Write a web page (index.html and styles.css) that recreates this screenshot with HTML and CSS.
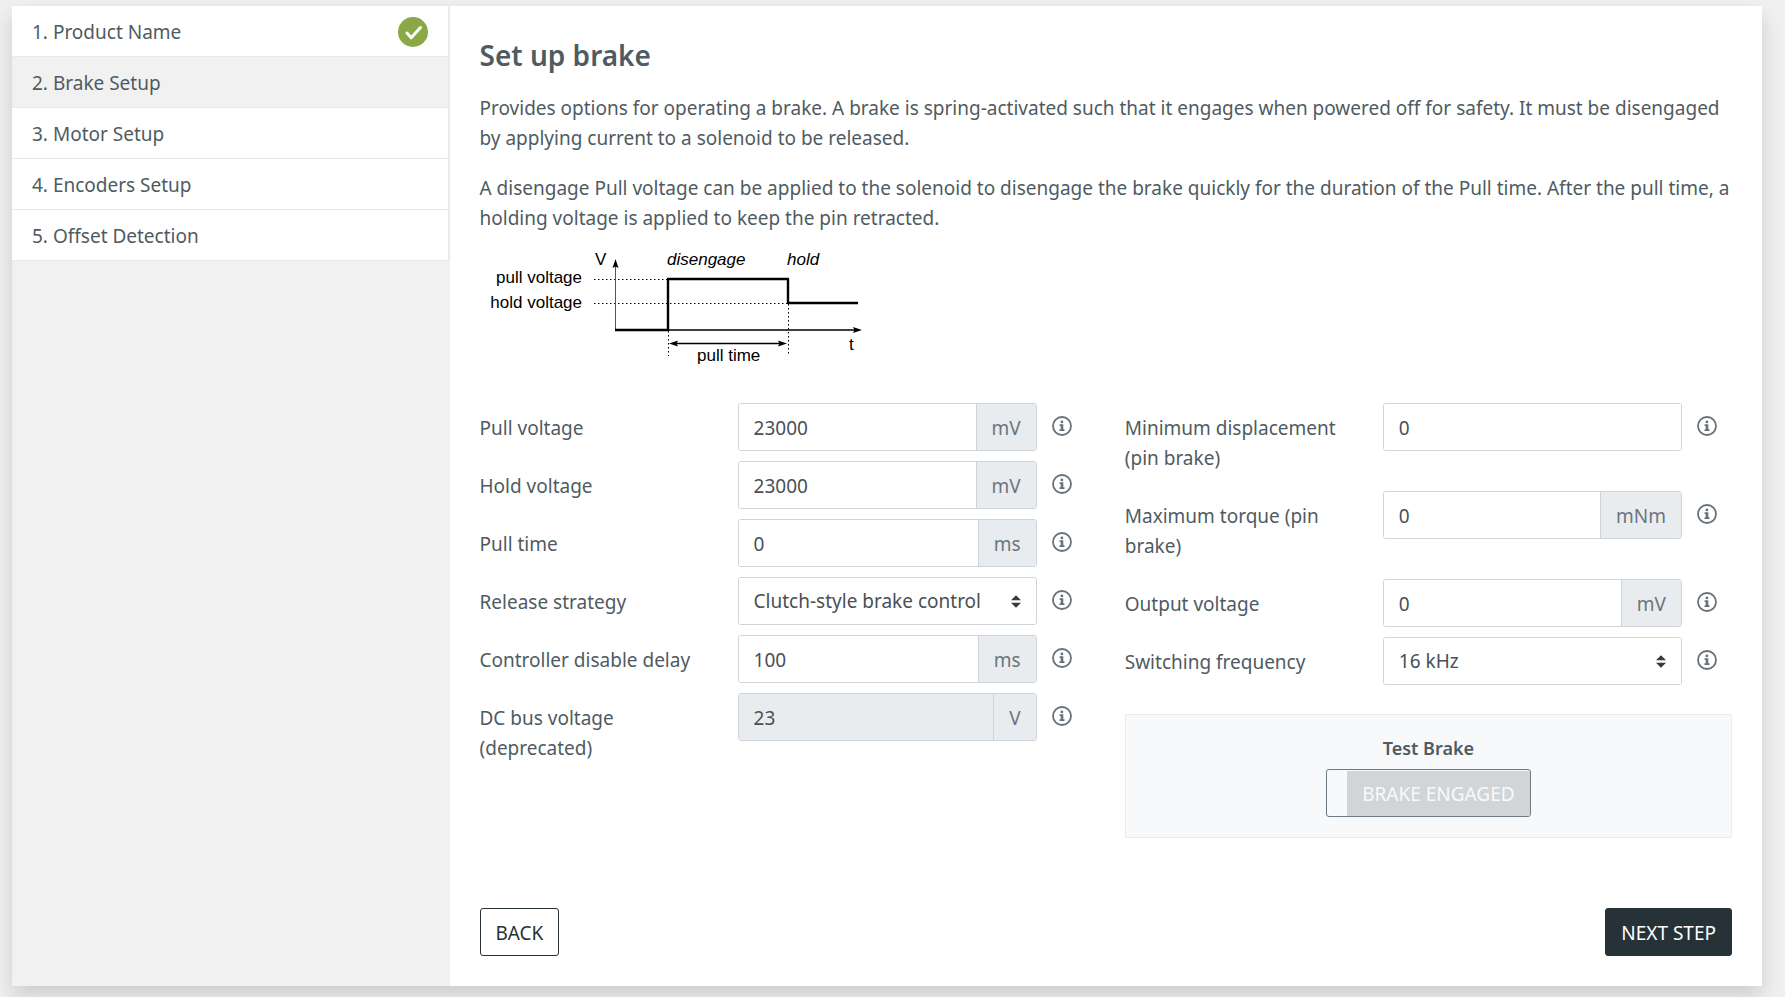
FILE: index.html
```html
<!DOCTYPE html>
<html lang="en">
<head>
<meta charset="utf-8">
<meta name="viewport" content="width=device-width, initial-scale=1">
<title>Brake Setup</title>
<link rel="stylesheet" href="styles.css">
</head>
<body>
<svg class="sprite" aria-hidden="true">
  <symbol id="info" viewBox="0 0 20 20">
    <circle cx="10" cy="10" r="9" fill="none" stroke="currentColor" stroke-width="1.8"/>
    <circle cx="9.9" cy="5.9" r="1.4" fill="currentColor"/>
    <path d="M7.6 8.300h3.700v5h1.200v1.700H7.500v-1.700h1.200V10H7.600z" fill="currentColor"/>
  </symbol>
</svg>
<div class="card">
  <nav class="steps" aria-label="Setup steps">
    <a class="step" href="#product">1. Product Name
      <svg class="done" viewBox="0 0 30 30" role="img" aria-label="Completed"><circle cx="15" cy="15" r="15" fill="#8aa846"/><path d="M9 16l4.200 4.800L22.500 10.500" fill="none" stroke="#fff" stroke-width="3" stroke-linecap="round" stroke-linejoin="round"/></svg>
    </a>
    <a class="step current" href="#brake" aria-current="step">2. Brake Setup</a>
    <a class="step" href="#motor">3. Motor Setup</a>
    <a class="step" href="#encoders">4. Encoders Setup</a>
    <a class="step" href="#offset">5. Offset Detection</a>
  </nav>
  <main class="content">
    <h1 class="title">Set up brake</h1>
    <p class="text">Provides options for operating a brake. A brake is spring-activated such that it engages when powered off for safety. It must be disengaged by applying current to a solenoid to be released.</p>
    <p class="text">A disengage Pull voltage can be applied to the solenoid to disengage the brake quickly for the duration of the Pull time. After the pull time, a holding voltage is applied to keep the pin retracted.</p>
    <svg class="diagram" width="400" height="140" viewBox="0 0 400 140" role="img" aria-label="Brake voltage over time">
      <g fill="none" stroke="#000">
        <path d="M114 46.500H188M114 70.500H308M188.500 98V123M308.500 71V123" stroke-dasharray="1.500 2.500"/>
        <path d="M135.500 97V32" stroke="#555"/>
        <path d="M135 97H376M195 110.500H301" stroke-width="1.300"/>
        <path d="M135 97H188V46H308V70H378" stroke-width="2.400" stroke-linejoin="round"/>
      </g>
      <path d="M135.500 26l3 9-3-1.500-3 1.500zM382 97l-9-3 1.500 3-1.500 3zM189 110.500l9-3-1.500 3 1.500 3zM307 110.500l-9-3 1.500 3-1.500 3z"/>
      <g class="diagram-text">
        <text x="115" y="32">V</text>
        <text x="102" y="50" text-anchor="end">pull voltage</text>
        <text x="102" y="75" text-anchor="end">hold voltage</text>
        <text x="187" y="32" font-style="italic">disengage</text>
        <text x="307" y="32" font-style="italic">hold</text>
        <text x="217" y="128">pull time</text>
        <text x="369" y="117">t</text>
      </g>
    </svg>
    <form class="form">
      <div class="column">
        <div class="field">
          <label class="label" for="pull-voltage">Pull voltage</label>
          <div class="group"><input class="input" id="pull-voltage" type="text" value="23000"><span class="unit">mV</span></div>
          <button class="help" type="button" aria-label="About pull voltage"><svg><use href="#info"/></svg></button>
        </div>
        <div class="field">
          <label class="label" for="hold-voltage">Hold voltage</label>
          <div class="group"><input class="input" id="hold-voltage" type="text" value="23000"><span class="unit">mV</span></div>
          <button class="help" type="button" aria-label="About hold voltage"><svg><use href="#info"/></svg></button>
        </div>
        <div class="field">
          <label class="label" for="pull-time">Pull time</label>
          <div class="group"><input class="input" id="pull-time" type="text" value="0"><span class="unit">ms</span></div>
          <button class="help" type="button" aria-label="About pull time"><svg><use href="#info"/></svg></button>
        </div>
        <div class="field">
          <label class="label" for="strategy">Release strategy</label>
          <div class="group"><select class="input select" id="strategy"><option>Clutch-style brake control</option></select></div>
          <button class="help" type="button" aria-label="About release strategy"><svg><use href="#info"/></svg></button>
        </div>
        <div class="field">
          <label class="label" for="delay">Controller disable delay</label>
          <div class="group"><input class="input" id="delay" type="text" value="100"><span class="unit">ms</span></div>
          <button class="help" type="button" aria-label="About controller disable delay"><svg><use href="#info"/></svg></button>
        </div>
        <div class="field">
          <label class="label" for="bus">DC bus voltage (deprecated)</label>
          <div class="group"><input class="input" id="bus" type="text" value="23" disabled><span class="unit">V</span></div>
          <button class="help" type="button" aria-label="About DC bus voltage"><svg><use href="#info"/></svg></button>
        </div>
      </div>
      <div class="column">
        <div class="field">
          <label class="label" for="displacement">Minimum displacement (pin brake)</label>
          <div class="group"><input class="input" id="displacement" type="text" value="0"></div>
          <button class="help" type="button" aria-label="About minimum displacement"><svg><use href="#info"/></svg></button>
        </div>
        <div class="field">
          <label class="label" for="torque">Maximum torque (pin brake)</label>
          <div class="group"><input class="input" id="torque" type="text" value="0"><span class="unit">mNm</span></div>
          <button class="help" type="button" aria-label="About maximum torque"><svg><use href="#info"/></svg></button>
        </div>
        <div class="field">
          <label class="label" for="output">Output voltage</label>
          <div class="group"><input class="input" id="output" type="text" value="0"><span class="unit">mV</span></div>
          <button class="help" type="button" aria-label="About output voltage"><svg><use href="#info"/></svg></button>
        </div>
        <div class="field">
          <label class="label" for="frequency">Switching frequency</label>
          <div class="group"><select class="input select" id="frequency"><option>16 kHz</option></select></div>
          <button class="help" type="button" aria-label="About switching frequency"><svg><use href="#info"/></svg></button>
        </div>
        <section class="test">
          <h2 class="test-title" id="test-title">Test Brake</h2>
          <button class="toggle" type="button" aria-describedby="test-title" aria-pressed="false" disabled><span class="toggle-text">BRAKE ENGAGED</span></button>
        </section>
      </div>
    </form>
    <div class="actions">
      <button class="button" type="button">BACK</button>
      <button class="button primary" type="button">NEXT STEP</button>
    </div>
  </main>
</div>
</body>
</html>
```
FILE: styles.css
```css
*, *::before, *::after { box-sizing: border-box; }

body {
  margin: 0;
  padding: 6px 23px 11px 12px;
  background: #f0f0f0;
  color: #4f5b62;
  font: 19px/30px "Segoe UI", "Noto Sans", sans-serif;
}

button, input, select { font: inherit; color: inherit; }

.sprite { position: absolute; width: 0; height: 0; }

.card {
  display: grid;
  grid-template-columns: minmax(0, 1fr) minmax(0, 3fr);
  min-height: calc(100vh - 17px);
  background: #fff;
  box-shadow: 0 10px 20px rgba(0, 0, 0, .15);
}

.steps { background: #f1f1f1; }

.step {
  display: flex;
  justify-content: space-between;
  align-items: center;
  padding: 11px 20px 9px;
  border-right: 2px solid #ebebeb;
  border-bottom: 1px solid #e9e9e9;
  background: #fff;
  color: inherit;
  text-decoration: none;
}

.step.current { background: #f1f1f1; }

.done { width: 30px; height: 30px; }

.content {
  display: flex;
  flex-direction: column;
  padding: 30px;
}

.title {
  margin: 0 0 19px;
  font-size: 28px;
  line-height: 38px;
  font-weight: 600;
}

.text { margin: 0 0 20px; }
.text + .diagram { margin-top: -20px; }

.diagram { max-width: 100%; }
.diagram-text { font: 17px "Liberation Sans", Arial, sans-serif; }

.form {
  display: grid;
  grid-template-columns: repeat(2, minmax(0, 1fr));
  column-gap: 38px;
  margin: 30px 0;
}

.column {
  display: flex;
  flex-direction: column;
  gap: 10px;
}

.field {
  display: grid;
  grid-template-columns: minmax(0, 258fr) minmax(0, 299fr) 50px;
  align-items: start;
}

.label { padding: 10px 36px 8px 0; }

.group {
  display: flex;
  height: 48px;
  overflow: hidden;
  border: 1px solid #ced4da;
  border-radius: 3px;
}

.input {
  flex: 1;
  min-width: 0;
  padding: 2px 15px 0;
  border: 0;
  background: #fff;
  color: #495057;
}

.input:disabled { background: #e9ecef; }

.select {
  appearance: none;
  padding: 0 32px 0 15px;
  background: #fff url("data:image/svg+xml,%3Csvg xmlns='http://www.w3.org/2000/svg' viewBox='0 0 4 5'%3E%3Cpath fill='%23343a40' d='M2 0L0 2h4zm0 5L0 3h4z'/%3E%3C/svg%3E") no-repeat right 15px center / 10px 13px;
}

.unit {
  display: flex;
  align-items: center;
  padding: 2px 15px 0;
  border-left: 1px solid #ced4da;
  background: #e9ecef;
  color: #6c757d;
}

.help {
  display: flex;
  margin-left: 15px;
  padding: 13px 0;
  border: 0;
  background: none;
  color: #66727b;
}

.help svg { width: 20px; height: 20px; }

.test {
  display: flex;
  flex-direction: column;
  align-items: center;
  gap: 6px;
  margin-top: 19px;
  padding: 18px 20px 20px;
  border: 1px solid #e9ecef;
  background: #f8f9fb;
}

.test-title {
  margin: 0;
  font-size: 18px;
  line-height: 30px;
  font-weight: 600;
}

.toggle {
  display: flex;
  height: 48px;
  padding: 1px 0 0 20px;
  overflow: hidden;
  border: 1px solid #6c7a83;
  border-radius: 3px;
  background: #f8f9fb;
}

.toggle-text {
  display: flex;
  align-items: center;
  padding: 0 15px;
  background: #d1d5d8;
  color: #f8f9fb;
}

.actions {
  display: flex;
  justify-content: space-between;
  margin-top: auto;
}

.button {
  height: 48px;
  padding: 2px 15px 0;
  border: 1px solid #263238;
  border-radius: 3px;
  background: #fff;
  color: #263238;
}

.button.primary { background: #263238; color: #fff; }
```
